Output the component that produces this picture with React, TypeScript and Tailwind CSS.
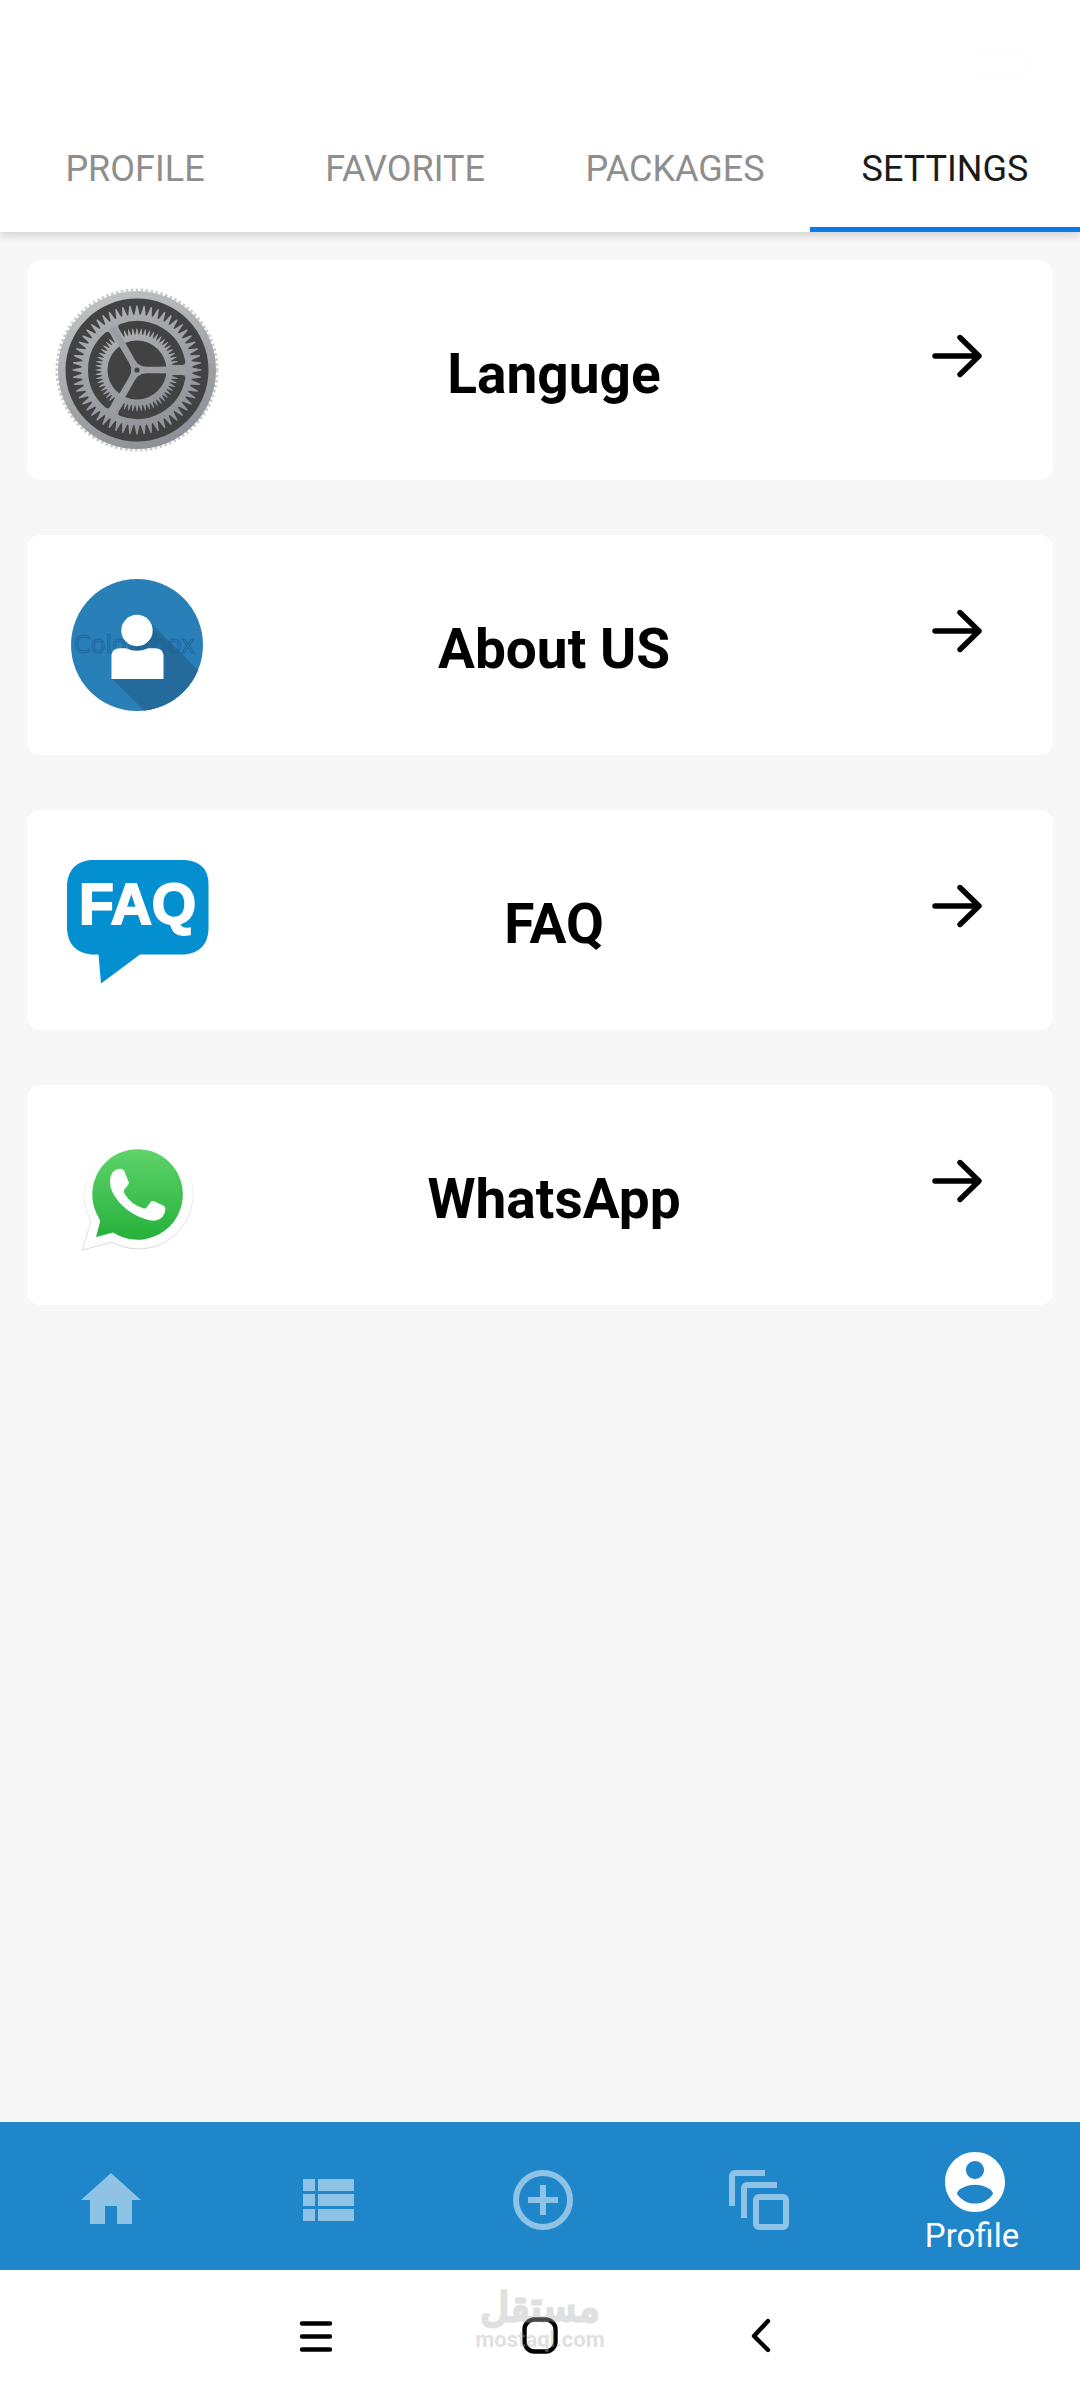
import { useState } from 'react';
import type { ReactNode } from 'react';
import { MdHome } from 'react-icons/md';

interface SettingsItem {
  label: string;
  icon: ReactNode;
}

interface IconProps {
  className?: string;
}

const TABS = ['PROFILE', 'FAVORITE', 'PACKAGES', 'SETTINGS'];

// Closed gear outline with `count` pointed teeth between two radii
function gearPath(count: number, root: number, tip: number) {
  const step = (Math.PI * 2) / count;
  const at = (r: number, a: number) => `${(r * Math.cos(a)).toFixed(2)} ${(r * Math.sin(a)).toFixed(2)}`;
  let d = '';
  for (let i = 0; i < count; i++) {
    const a = i * step;
    d += `${i === 0 ? 'M' : 'L'}${at(root, a - step * 0.4)}L${at(tip, a - step * 0.08)}L${at(tip, a + step * 0.08)}L${at(root, a + step * 0.4)}`;
  }
  return `${d}Z`;
}

const OUTER_GEAR = gearPath(56, 55.5, 64.5);
const INNER_GEAR = gearPath(60, 35.5, 41.5);

function GearIcon() {
  return (
    <svg viewBox="-82 -82 164 164" className="size-[164px]" aria-hidden="true">
      <defs>
        <linearGradient id="rim" x1="0.3" y1="0" x2="0.7" y2="1">
          <stop offset="0" stopColor="#c0c1c3" />
          <stop offset="1" stopColor="#8b8e94" />
        </linearGradient>
        <linearGradient id="wheel" x1="0.3" y1="0" x2="0.7" y2="1">
          <stop offset="0" stopColor="#adaeb0" />
          <stop offset="1" stopColor="#8f9298" />
        </linearGradient>
      </defs>
      <circle r="80" fill="none" stroke="#cbccce" strokeWidth="3" strokeDasharray="2.6 2.4" />
      <circle r="79" fill="url(#rim)" />
      <circle r="71.5" fill="#424242" />
      <path d={OUTER_GEAR} fill="url(#wheel)" />
      {[0, 120, 240].map((angle) => (
        <path
          key={angle}
          transform={`rotate(${angle})`}
          d="M30 8 L45.3 8 A46 46 0 0 1 -15.7 43.2 L-8 30 A31 31 0 0 0 30 8Z"
          fill="#424242"
          stroke="#424242"
          strokeWidth="6"
          strokeLinejoin="round"
        />
      ))}
      <path d={INNER_GEAR} fill="url(#wheel)" />
      <circle r="29.5" fill="#424242" />
      {[0, 120, 240].map((angle) => (
        <path key={angle} transform={`rotate(${angle})`} d="M0 -4.4 L10 -3.3 L49 -3.6 L49 3.6 L10 3.3 L0 4.4Z" fill="#9b9da1" />
      ))}
      <circle r="6" fill="#9b9da1" />
      <circle r="2.6" fill="#424242" />
    </svg>
  );
}

function AboutIcon() {
  return (
    <svg viewBox="-82 -82 164 164" className="size-[164px]" aria-hidden="true">
      <clipPath id="disc">
        <circle r="66" />
      </clipPath>
      <circle r="66" fill="#2980b9" />
      <path clipPath="url(#disc)" d="M11 -25 L76 40 L40 98 L-25 34Z" fill="#246b9c" />
      <text x="-63" y="8" fontFamily="DejaVu Sans, sans-serif" fontSize="24" fill="none" stroke="#1c5f8f" strokeOpacity="0.8">
        Colourbox
      </text>
      <circle cy="-14.5" r="15.7" fill="#fff" />
      <path d="M-25.5 34 V10 Q-25 3.5 -17 3.2 L-11 3.2 Q0 8.5 11 3.2 L19 3.2 Q26 4 26.5 10 V34Z" fill="#fff" />
    </svg>
  );
}

function FaqIcon() {
  return (
    <svg viewBox="-82 -82 164 164" className="size-[164px]" aria-hidden="true">
      <path
        d="M-46 -60 H48 Q71.5 -58 71.5 -36 V10 Q70 32 48 34.5 H3 L-36 63.5 L-38.5 34.5 H-46 Q-68 32 -70 10 V-36 Q-68 -58 -46 -60Z"
        fill="#038fd0"
      />
      <text
        x="-58"
        y="4"
        fontFamily="Liberation Sans, Arial, sans-serif"
        fontWeight="700"
        fontSize="57"
        fill="#fff"
        stroke="#fff"
        strokeWidth="2"
      >
        FAQ
      </text>
    </svg>
  );
}

function WhatsAppIcon() {
  return (
    <svg viewBox="-82 -82 164 164" className="size-[164px]" aria-hidden="true">
      <defs>
        <linearGradient id="bubble" x1="0" y1="0" x2="0" y2="1">
          <stop offset="0" stopColor="#5fd36a" />
          <stop offset="1" stopColor="#25b13b" />
        </linearGradient>
        <linearGradient id="bubbleEdge" x1="0" y1="0" x2="0" y2="1">
          <stop offset="0.1" stopColor="#ffffff" />
          <stop offset="1" stopColor="#d6d8dc" />
        </linearGradient>
      </defs>
      <path d="M-46 26 A54.5 54.5 0 1 1 -25 47 L-54.5 55Z" fill="#fff" stroke="url(#bubbleEdge)" strokeWidth="1" />
      <path d="M-37.5 24 A45.3 45.3 0 1 1 -24 37.5 L-41 42 L-37 27Z" fill="url(#bubble)" />
      <path
        transform="scale(0.3333) translate(-231 -195)"
        d="M180 116 Q190 116 193 124 L207 158 Q207 162 192 180 Q190 185 194 192 Q215 225 250 235 Q257 237 261 231 L272 216 Q276 211 283 214 L312 228 Q317 231 316 240 Q312 265 290 271 Q278 275 255 267 Q190 245 158 188 Q149 170 150 153 Q151 118 180 116Z"
        fill="#fff"
      />
    </svg>
  );
}

function ArrowIcon() {
  return (
    <svg
      viewBox="-27 -27 54 54"
      className="size-[54px]"
      fill="none"
      stroke="currentColor"
      strokeWidth="5.4"
      strokeLinecap="round"
      strokeLinejoin="round"
      aria-hidden="true"
    >
      <path d="M-22 0H22M3 -18.5L22 0L3 18.5" />
    </svg>
  );
}

function ListIcon({ className }: IconProps) {
  return (
    <svg viewBox="0 0 24 24" className={className} fill="currentColor" aria-hidden="true">
      <path d="M4 14h4v-4H4v4zm0 5h4v-4H4v4zM4 9h4V5H4v4zm5 5h12v-4H9v4zm0 5h12v-4H9v4zM9 5v4h12V5H9z" />
    </svg>
  );
}

function AddIcon({ className }: IconProps) {
  return (
    <svg viewBox="0 0 24 24" className={className} fill="none" stroke="currentColor" strokeWidth="2" aria-hidden="true">
      <circle cx="12" cy="12" r="9" />
      <path d="M12 7v10M7 12h10" />
    </svg>
  );
}

function StackIcon({ className }: IconProps) {
  return (
    <svg viewBox="0 0 24 24" className={className} fill="none" stroke="currentColor" strokeWidth="2" aria-hidden="true">
      <path d="M14 3H4a1 1 0 0 0-1 1v10" />
      <path d="M18 7H8a1 1 0 0 0-1 1v10" />
      <rect x="11" y="11" width="10" height="10" rx="1" />
    </svg>
  );
}

function AccountIcon({ className }: IconProps) {
  return (
    <svg viewBox="0 0 24 24" className={className} fill="currentColor" aria-hidden="true">
      <path d="M12 2C6.48 2 2 6.48 2 12s4.48 10 10 10 10-4.48 10-10S17.52 2 12 2zm0 3c1.66 0 3 1.34 3 3s-1.34 3-3 3-3-1.34-3-3 1.34-3 3-3zm0 14.2c-2.5 0-4.71-1.28-6-3.22.03-1.99 4-3.08 6-3.08 1.99 0 5.97 1.09 6 3.08-1.29 1.94-3.5 3.22-6 3.22z" />
    </svg>
  );
}

const ITEMS: SettingsItem[] = [
  { label: 'Languge', icon: <GearIcon /> },
  { label: 'About US', icon: <AboutIcon /> },
  { label: 'FAQ', icon: <FaqIcon /> },
  { label: 'WhatsApp', icon: <WhatsAppIcon /> },
];

const NAV_ITEMS = [
  { name: 'Home', Icon: MdHome },
  { name: 'List', Icon: ListIcon },
  { name: 'Add', Icon: AddIcon },
  { name: 'Collections', Icon: StackIcon },
  { name: 'Profile', Icon: AccountIcon },
];

function TopTabs() {
  const [active, setActive] = useState('SETTINGS');

  return (
    <header className="bg-white shadow-[0_2px_10px_rgba(0,0,0,0.2)]">
      {/* Status bar */}
      <div className="flex h-[110px] items-start justify-end px-[50px] pt-[50px]">
        <div className="h-[26px] w-14 rounded-md border-2 border-[#fdfdfd]" />
      </div>
      <div role="tablist" className="grid grid-cols-4">
        {TABS.map((tab) => (
          <button
            key={tab}
            role="tab"
            aria-selected={active === tab}
            onClick={() => setActive(tab)}
            className={`h-[122px] border-b-[5px] text-4xl ${
              active === tab ? 'border-[#0c79e8] text-[#1a1a1a]' : 'border-transparent text-[#8e8e8e]'
            }`}
          >
            {tab}
          </button>
        ))}
      </div>
    </header>
  );
}

function SettingsCard({ label, icon }: SettingsItem) {
  return (
    <li>
      <button className="flex h-[220px] w-full items-center rounded-[14px] bg-white text-black">
        <span className="flex w-[220px] shrink-0 justify-center">{icon}</span>
        <span className="flex-1 pt-2 text-center text-[55px] leading-[64px] font-bold">{label}</span>
        <span className="flex w-48 shrink-0 justify-center pb-7">
          <ArrowIcon />
        </span>
      </button>
    </li>
  );
}

function BottomNav() {
  const [active, setActive] = useState('Profile');

  return (
    <nav aria-label="Main navigation" className="grid h-[148px] grid-cols-5 bg-[#1e86c9] pt-2">
      {NAV_ITEMS.map(({ name, Icon }) => (
        <button
          key={name}
          aria-label={name}
          onClick={() => setActive(name)}
          className={`flex flex-col items-center justify-center ${active === name ? 'text-white' : 'text-[#8ec3e5]'}`}
        >
          <Icon className="ml-1.5 size-[72px]" />
          {active === name && <span className="text-[33px] leading-9">{name}</span>}
        </button>
      ))}
    </nav>
  );
}

function SystemBar() {
  return (
    <div className="relative flex h-[130px] items-center justify-center bg-white text-black">
      <button aria-label="Recent apps" className="flex w-[222px] justify-center">
        <svg viewBox="-24 -24 48 48" className="size-12" stroke="currentColor" strokeWidth="4.4" strokeLinecap="round">
          <path d="M-16 -11.5H12M-16 1.5H12M-16 14.5H12" />
        </svg>
      </button>
      <button aria-label="Home screen" className="flex w-[222px] justify-center">
        <svg viewBox="-24 -24 48 48" className="size-12" fill="none" stroke="currentColor" strokeWidth="4.4">
          <rect x="-15.5" y="-15.5" width="31" height="32" rx="10" />
        </svg>
      </button>
      <button aria-label="Back" className="flex w-[222px] justify-center">
        <svg
          viewBox="-24 -24 48 48"
          className="size-12"
          fill="none"
          stroke="currentColor"
          strokeWidth="4.4"
          strokeLinecap="round"
          strokeLinejoin="round"
        >
          <path d="M6 -14L-8 1L6 15" />
        </svg>
      </button>

      {/* Watermark laid over the home button */}
      <div className="pointer-events-none absolute inset-x-0 top-4 flex flex-col items-center text-[#b4b4b4] opacity-40">
        <span
          lang="ar"
          dir="rtl"
          className="font-['DejaVu_Sans',sans-serif] text-[40px] leading-[42px] [-webkit-text-stroke:3px_#b4b4b4]"
        >
          مستقل
        </span>
        <span className="text-[22px] leading-6 font-bold">mostaql.com</span>
      </div>
    </div>
  );
}

export default function App() {
  return (
    <div className="flex min-h-screen flex-col bg-[#f7f7f7] font-[Roboto,sans-serif]">
      <TopTabs />
      <main className="flex-1 px-[27px] pt-7 pb-14">
        <ul className="flex flex-col gap-[55px]">
          {ITEMS.map((item) => (
            <SettingsCard key={item.label} {...item} />
          ))}
        </ul>
      </main>
      <BottomNav />
      <SystemBar />
    </div>
  );
}
